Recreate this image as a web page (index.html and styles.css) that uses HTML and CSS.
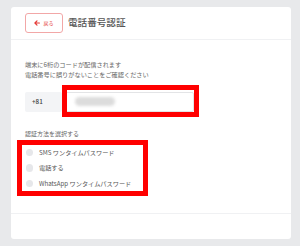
FILE: index.html
```html
<!DOCTYPE html>
<html lang="ja">
<head>
<meta charset="utf-8">
<link rel="stylesheet" href="styles.css">
</head>
<body>
<div class="card">
  <header class="card-head">
    <button class="back">
      <svg class="back-icon" viewBox="0 0 10 10" width="6" height="6"><path d="M9 5H2M5 1.5L1.5 5L5 8.5" fill="none" stroke="#e53935" stroke-width="2" stroke-linecap="round" stroke-linejoin="round"/></svg>
      <span>戻る</span>
    </button>
    <h1 class="title">電話番号認証</h1>
  </header>
  <section class="card-body">
    <p class="note">端末に6桁のコードが配信されます<br>電話番号に誤りがないことをご確認ください</p>
    <div class="phone-row">
      <span class="cc">+81</span>
      <div class="phone-input"><span class="masked"></span></div>
      <span class="mark mark-phone"></span>
    </div>
    <p class="label">認証方法を選択する</p>
    <div class="options">
      <label class="opt"><span class="radio"></span><span>SMS ワンタイムパスワード</span></label>
      <label class="opt"><span class="radio"></span><span>電話する</span></label>
      <label class="opt"><span class="radio"></span><span>WhatsApp ワンタイムパスワード</span></label>
      <span class="mark mark-options"></span>
    </div>
  </section>
  <footer class="card-foot"></footer>
</div>
</body>
</html>
```
FILE: styles.css
```css
* { box-sizing: border-box; }
html, body { margin: 0; }
body {
  width: 300px;
  height: 246px;
  background: #e8e9eb;
  padding: 7px 9px 7px 11px;
  font-family: "Noto Sans CJK JP", "Noto Sans", sans-serif;
  color: #555;
}
.card {
  width: 280px;
  height: 232px;
  background: #fff;
  border-radius: 3px;
  display: flex;
  flex-direction: column;
}
.card-head {
  height: 33px;
  border-bottom: 1px solid #f0f1f3;
  display: flex;
  align-items: center;
  padding: 0 14px 1px;
  gap: 5px;
}
.back {
  width: 38px;
  height: 20px;
  border: 1px solid #f2a7a7;
  border-radius: 3px;
  background: #fff;
  display: flex;
  align-items: center;
  justify-content: center;
  gap: 3px;
  padding: 0;
  font-family: inherit;
  font-size: 5px;
  color: #e53935;
}
.back-icon { display: block; }
.title {
  margin: 0;
  font-size: 9.6px;
  font-weight: 500;
  color: #555;
  line-height: 1;
}
.card-body {
  flex: 1;
  padding: 20px 14px 0;
}
.note {
  margin: 0;
  font-size: 6.2px;
  line-height: 9.5px;
  color: #666;
}
.phone-row {
  position: relative;
  margin-top: 12.75px;
  height: 20px;
  display: flex;
  gap: 2px;
}
.cc {
  width: 37px;
  background: #f3f4f6;
  border-radius: 2px;
  font-size: 6.3px;
  font-weight: 500;
  color: #444;
  display: flex;
  align-items: center;
  padding-left: 7px;
}
.phone-input {
  width: 130px;
  border: 1px solid #e3e4e6;
  border-radius: 2px;
  display: flex;
  align-items: center;
  padding-left: 10px;
}
.masked {
  width: 40px;
  height: 9px;
  border-radius: 5px;
  background: #dcdcdc;
  filter: blur(1.5px);
}
.mark {
  position: absolute;
  border: 5px solid #ff0000;
  pointer-events: none;
}
.mark-phone {
  left: 37px;
  top: -7px;
  width: 137px;
  height: 32px;
}
.label {
  margin: 17.5px 0 0;
  font-size: 6px;
  line-height: 9px;
  color: #666;
}
.options {
  position: relative;
  margin-top: 6.25px;
  display: flex;
  flex-direction: column;
}
.opt {
  height: 15.5px;
  display: flex;
  align-items: center;
  gap: 6px;
  font-size: 6.2px;
  color: #555;
}
.radio {
  width: 7.5px;
  height: 7.5px;
  margin-left: 0.5px;
  border-radius: 50%;
  background: #e6e7ea;
}
.mark-options {
  left: -8px;
  top: -4.75px;
  width: 131px;
  height: 56px;
}
.card-foot {
  height: 26px;
  border-top: 1px solid #f0f1f3;
}
```
